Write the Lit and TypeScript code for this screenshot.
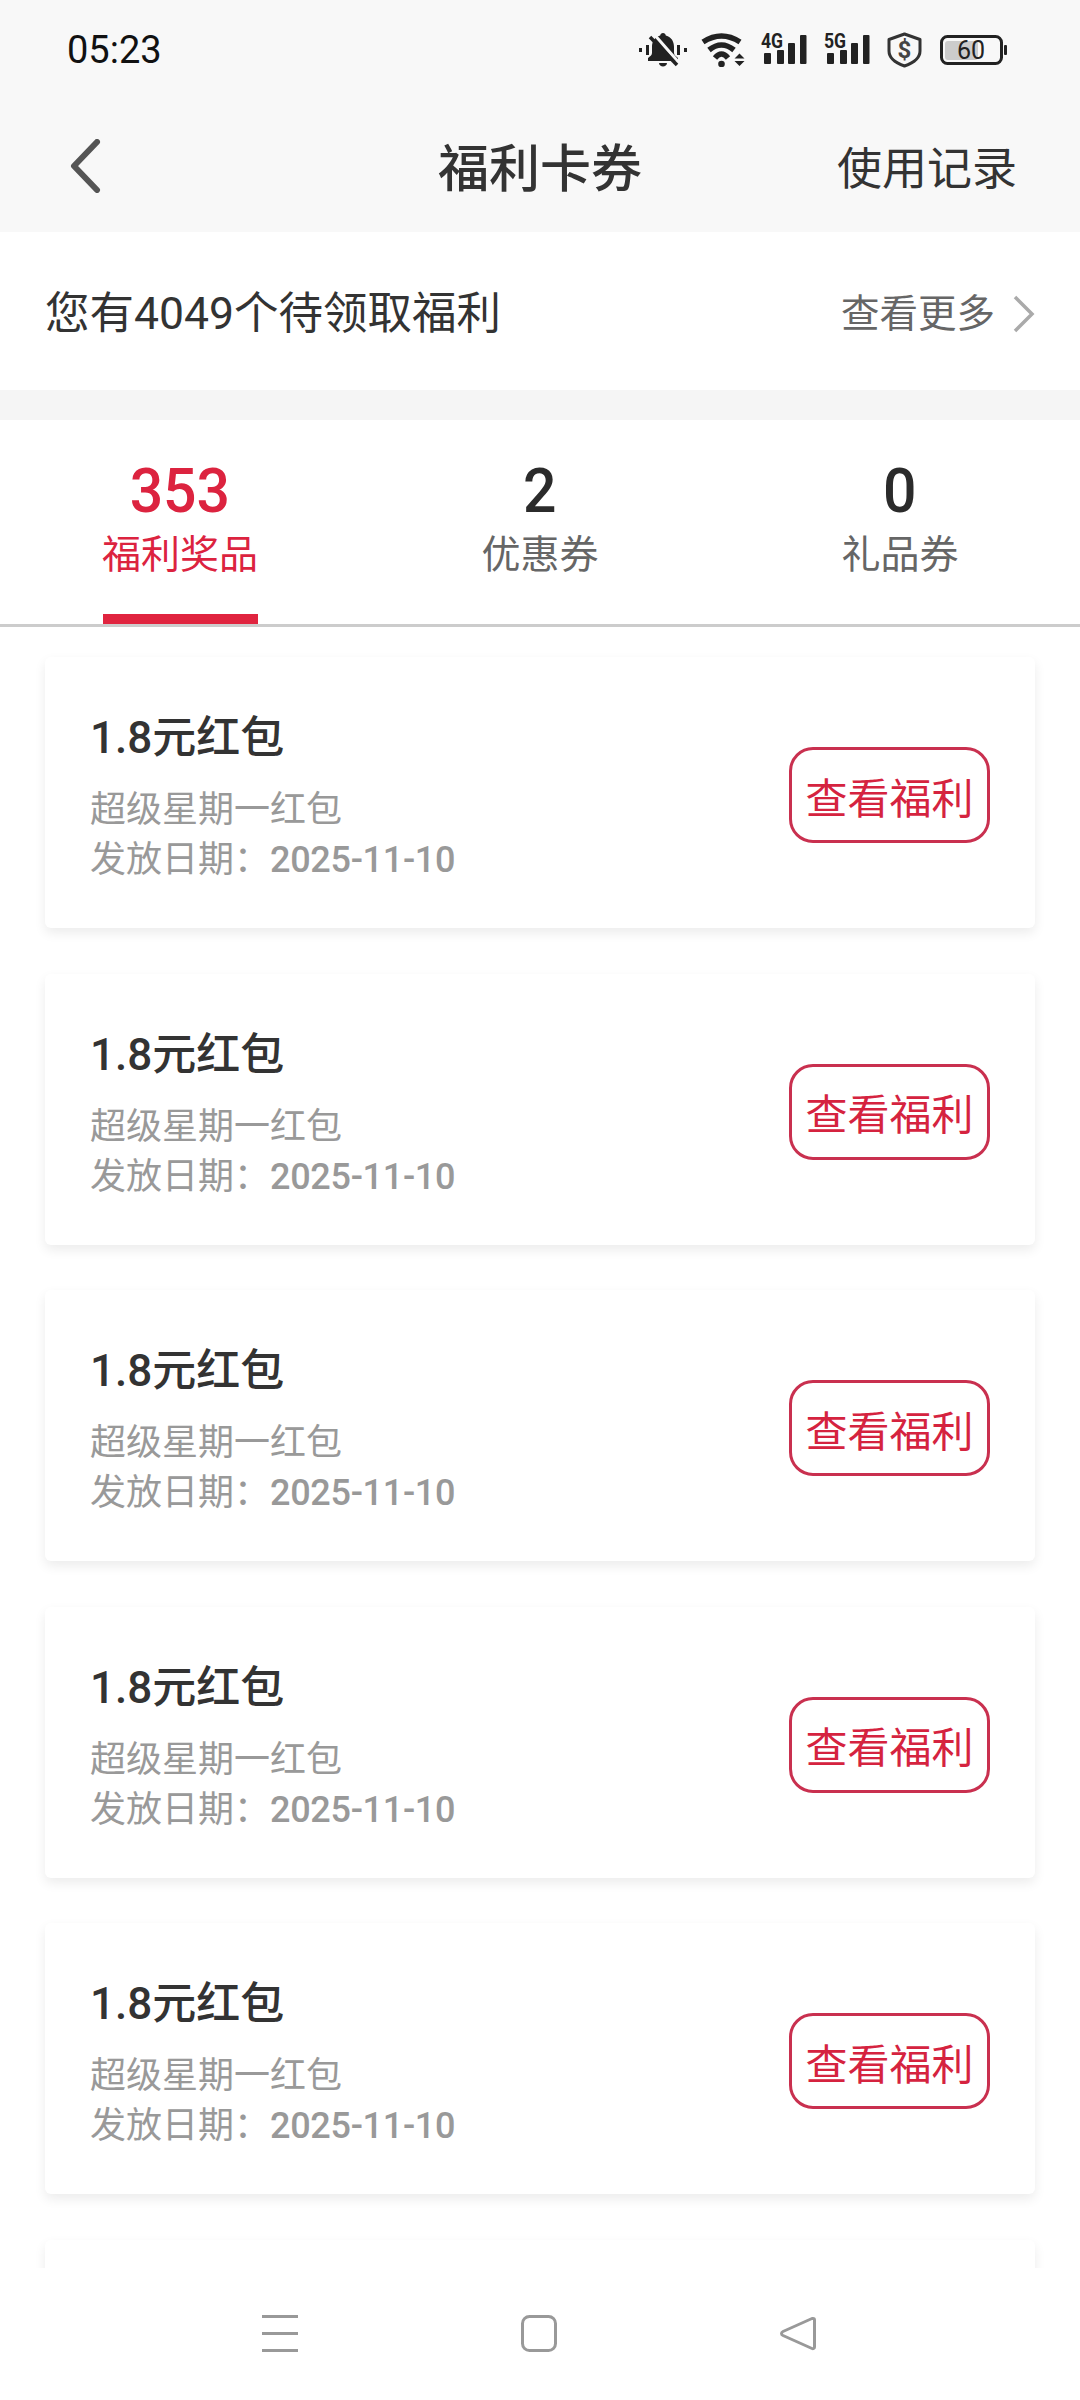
import { LitElement, css, html } from 'lit'
import { customElement, state } from 'lit/decorators.js'

interface Tab {
  count: number
  label: string
  active?: boolean
}

const signal = (label: string) => html`
  <svg class="sig" width="49" height="38" viewBox="0 -4 49 38">
    <text class="net" transform="translate(1 15) scale(0.88 1)">${label}</text>
    <rect x="4" y="20" width="7" height="11" rx="1" />
    <rect x="17" y="17" width="7" height="14" rx="1" />
    <rect x="28" y="10" width="7" height="21" rx="1" />
    <rect x="40" y="2" width="6.5" height="29" rx="1" />
  </svg>
`

@customElement('app-root')
export class AppRoot extends LitElement {
  @state()
  tabs: Tab[] = [
    { count: 353, label: '福利奖品', active: true },
    { count: 2, label: '优惠券' },
    { count: 0, label: '礼品券' },
  ]

  @state()
  cards = [1, 2, 3, 4, 5]

  private renderStatus() {
    return html`
      <div class="status">
        <span class="time">05:23</span>
        <div class="icons">
          <svg width="48" height="34" viewBox="0 0 48 34">
            <path d="M24 0c1.600 0 2.600 1 2.800 2.400C32.600 4 35 8.500 35 14v6c0 2 2 3.500 4 5v3H9v-3c2-1.500 4-3 4-5v-6c0-5.500 2.400-10 8.200-11.600C21.400 1 22.400 0 24 0z" fill="#222" />
            <path d="M20 30h8c0 2-2 3.500-4 3.500S20 32 20 30z" fill="#222" />
            <path d="M14 0L42 32" stroke="#f8f8f8" stroke-width="3" fill="none" />
            <path d="M11 4L38 32" stroke="#222" stroke-width="3.500" fill="none" />
            <path d="M1.500 15v4M8.500 12v10M39.500 12v10M46.500 15v4" stroke="#222" stroke-width="3" fill="none" />
          </svg>
          <svg width="45" height="34" viewBox="0 0 45 34">
            <g fill="none" stroke="#222" stroke-width="5.500">
              <path d="M2 9Q20.500 -3 39 9" />
              <path d="M8 17Q20.500 7 33 17" />
              <path d="M14 25Q20.500 17 27 25" />
            </g>
            <circle cx="20.500" cy="31" r="3.300" fill="#222" />
            <path d="M38.500 20.500l5 5h-10zM33.500 28h10l-5 5z" fill="#222" />
          </svg>
          ${signal('4G')} ${signal('5G')}
          <svg width="40" height="36" viewBox="0 0 40 36">
            <path d="M18.500 2L34 7.500V19c0 7.500-7 12-15.500 15C10 31 3 26.500 3 19V7.500z" fill="none" stroke="#333" stroke-width="3" stroke-linejoin="round" />
            <text x="18.500" y="26" class="dollar">$</text>
          </svg>
          <svg width="67" height="30" viewBox="0 0 67 30">
            <rect x="5" y="6" width="33" height="19" rx="3" fill="#ccc" />
            <rect x="1.500" y="1.500" width="60" height="27" rx="6" fill="none" stroke="#222" stroke-width="3" />
            <rect x="64" y="10" width="3" height="10" rx="1" fill="#222" />
            <text x="31" y="24" class="level">60</text>
          </svg>
        </div>
      </div>
    `
  }

  protected render() {
    return html`
      <header>
        ${this.renderStatus()}
        <nav>
          <svg class="back" width="31" height="54" viewBox="0 0 31 54">
            <path d="M27 3L4 27l23 24" fill="none" stroke="#555" stroke-width="6" stroke-linecap="round" stroke-linejoin="round" />
          </svg>
          <h1>福利卡券</h1>
          <span class="record">使用记录</span>
        </nav>
      </header>

      <div class="notice">
        <span class="pending">您有4049个待领取福利</span>
        <span class="more">
          查看更多
          <svg width="22" height="38" viewBox="0 0 22 38">
            <path d="M2 2l17 17L2 36" fill="none" stroke="#aaa" stroke-width="3.500" />
          </svg>
        </span>
      </div>

      <div class="tabs">
        ${this.tabs.map(
          (tab) => html`
            <div class="tab ${tab.active ? 'active' : ''}">
              <span class="count">${tab.count}</span>
              <span class="label">${tab.label}</span>
              <span class="bar"></span>
            </div>
          `,
        )}
      </div>

      <main>
        ${this.cards.map(
          () => html`
            <section class="card">
              <div class="info">
                <div class="name">1.8元红包</div>
                <div class="desc">超级星期一红包</div>
                <div class="desc">发放日期：<span class="date">2025-11-10</span></div>
              </div>
              <span class="btn">查看福利</span>
            </section>
          `,
        )}
        <section class="card"></section>
      </main>

      <footer>
        <svg width="36" height="37" viewBox="0 0 36 37">
          <path d="M0 1.500h36M0 18.500h36M0 35.500h36" stroke="#999" stroke-width="3" fill="none" />
        </svg>
        <svg width="36" height="37" viewBox="0 0 36 37">
          <rect x="1.500" y="1.500" width="33" height="34" rx="7" fill="none" stroke="#999" stroke-width="3" />
        </svg>
        <svg width="36" height="37" viewBox="0 0 36 37">
          <path d="M33 3.500c1 0 1.500.5 1.500 1.500v27c0 1.500-1.500 2-2.500 1.500L3 20.500c-2-1-2-3 0-4L32 3.500z" fill="none" stroke="#999" stroke-width="3" stroke-linejoin="round" />
        </svg>
      </footer>
    `
  }

  static styles = css`
    :host {
      display: flex;
      flex-direction: column;
      height: 2400px;
      overflow: hidden;
      background: #fff;
      font-family: Roboto, 'Noto Sans CJK SC', sans-serif;
      color: #333;
    }

    header {
      background: #f8f8f8;
      height: 232px;
    }
    .status {
      height: 100px;
      display: flex;
      align-items: center;
      justify-content: space-between;
      padding: 0 73px 0 67px;
    }
    .time {
      font-size: 38px;
      line-height: 44px;
      color: #111;
    }
    .icons {
      display: flex;
      align-items: center;
      gap: 14px;
    }
    .sig {
      fill: #222;
      margin-top: -4px;
    }
    .net {
      font-size: 20px;
      font-weight: 700;
    }
    .dollar {
      font-size: 24px;
      font-weight: 700;
      fill: #444;
      text-anchor: middle;
    }
    .level {
      font-size: 25px;
      fill: #222;
      text-anchor: middle;
    }

    nav {
      height: 132px;
      display: flex;
      align-items: center;
      justify-content: space-between;
      padding: 0 63px 0 70px;
      position: relative;
    }
    h1 {
      position: absolute;
      left: 0;
      right: 0;
      margin: 8px 0 0;
      text-align: center;
      font-size: 51px;
      line-height: 60px;
      font-weight: 500;
    }
    .record {
      font-size: 45px;
      line-height: 60px;
      margin-top: 8px;
    }

    .notice {
      box-sizing: border-box;
      height: 188px;
      display: flex;
      align-items: center;
      justify-content: space-between;
      padding: 5px 45px 0;
      border-bottom: 30px solid #f5f5f5;
    }
    .pending {
      font-size: 44.500px;
      line-height: 60px;
    }
    .more {
      display: flex;
      align-items: center;
      gap: 18px;
      font-size: 38.500px;
      line-height: 50px;
      color: #666;
    }

    .tabs {
      height: 204px;
      display: grid;
      grid-template-columns: repeat(3, 1fr);
      border-bottom: 3px solid #ccc;
    }
    .tab {
      display: flex;
      flex-direction: column;
      align-items: center;
      padding-top: 36px;
      color: #666;
    }
    .count {
      font-size: 62px;
      line-height: 70px;
      font-weight: 500;
      color: #2b2b2b;
      transform: scaleX(0.95);
    }
    .label {
      font-size: 39px;
      line-height: 50px;
      margin-top: 4px;
    }
    .bar {
      margin-top: auto;
      width: 155px;
      height: 10px;
    }
    .tab.active,
    .tab.active .count {
      color: #dc233f;
    }
    .tab.active .bar {
      background: #e0243f;
    }

    main {
      flex: 1;
      min-height: 0;
      overflow: hidden;
      display: flex;
      flex-direction: column;
      gap: 45.500px;
      padding: 30px 45px 0;
    }
    .card {
      flex: none;
      height: 271px;
      box-sizing: border-box;
      display: flex;
      align-items: center;
      justify-content: space-between;
      padding: 0 45px;
      background: #fff;
      border-radius: 6px;
      box-shadow: 0 5px 12px rgba(0, 0, 0, 0.08);
    }
    .info {
      padding-top: 13px;
    }
    .name {
      font-size: 44px;
      line-height: 50px;
      font-weight: 500;
      margin-bottom: 22px;
    }
    .desc {
      font-size: 36px;
      line-height: 50px;
      color: #999;
    }
    .date {
      font-weight: 500;
      letter-spacing: -0.3px;
    }
    .btn {
      box-sizing: border-box;
      width: 201px;
      height: 96px;
      margin-top: 5px;
      display: flex;
      align-items: center;
      justify-content: center;
      border: 3px solid #c9304f;
      border-radius: 24px;
      font-size: 42px;
      color: #d5233f;
    }

    footer {
      flex: none;
      height: 132px;
      display: flex;
      background: #fff;
      position: relative;
      padding: 47px 0 0 262px;
      box-sizing: border-box;
      gap: 223px;
      align-items: flex-start;
    }
  `
}

declare global {
  interface HTMLElementTagNameMap {
    'app-root': AppRoot
  }
}
